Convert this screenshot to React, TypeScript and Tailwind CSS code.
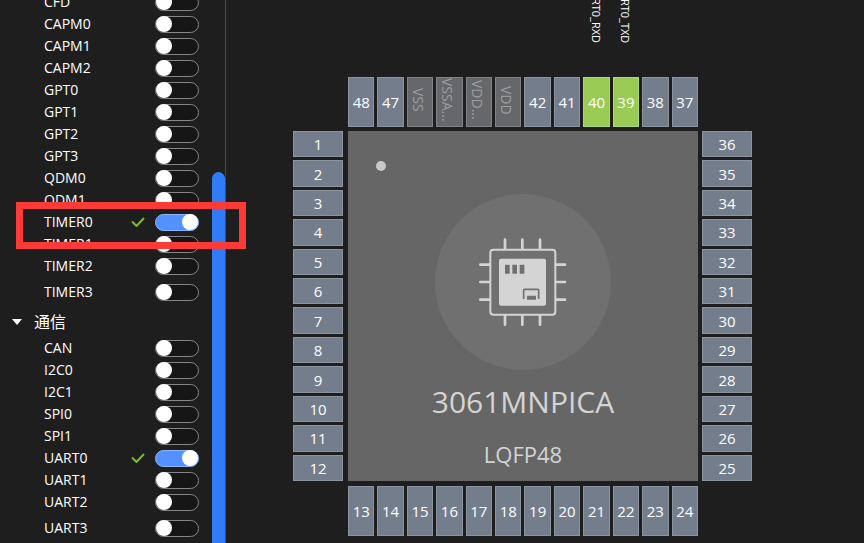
type Peripheral = { name: string; on?: boolean };
type Pin = { label: string; kind?: "power" | "active"; signal?: string };

const TIMERS: Peripheral[] = [
  { name: "CFD" },
  { name: "CAPM0" },
  { name: "CAPM1" },
  { name: "CAPM2" },
  { name: "GPT0" },
  { name: "GPT1" },
  { name: "GPT2" },
  { name: "GPT3" },
  { name: "QDM0" },
  { name: "QDM1" },
  { name: "TIMER0", on: true },
  { name: "TIMER1" },
  { name: "TIMER2" },
  { name: "TIMER3" },
];

const COMMS: Peripheral[] = [
  { name: "CAN" },
  { name: "I2C0" },
  { name: "I2C1" },
  { name: "SPI0" },
  { name: "SPI1" },
  { name: "UART0", on: true },
  { name: "UART1" },
  { name: "UART2" },
  { name: "UART3" },
];

const TOP: Pin[] = [
  { label: "48" },
  { label: "47" },
  { label: "VSS", kind: "power" },
  { label: "VSSA...", kind: "power" },
  { label: "VDD...", kind: "power" },
  { label: "VDD", kind: "power" },
  { label: "42" },
  { label: "41" },
  { label: "40", kind: "active", signal: "UART0_RXD" },
  { label: "39", kind: "active", signal: "UART0_TXD" },
  { label: "38" },
  { label: "37" },
];

const count = (from: number, step: number): Pin[] =>
  Array.from({ length: 12 }, (_, i) => ({ label: String(from + i * step) }));

const PIN_STYLE = {
  normal: "bg-[#737d8c] border-[#8b949f] text-white text-[15px]",
  active: "bg-[#9acb54] border-[#aed872] text-white text-[15px]",
  power: "bg-[#66676a] border-[#808285] text-[#9c9ea0] text-sm pr-1 pb-1 [writing-mode:vertical-rl]",
};

function PinButton({ pin }: { pin: Pin }) {
  return (
    <button
      type="button"
      className={`flex min-h-0 min-w-0 items-center justify-center border leading-5 whitespace-nowrap ${PIN_STYLE[pin.kind ?? "normal"]}`}
    >
      {pin.label}
    </button>
  );
}

function PeripheralList({ items }: { items: Peripheral[] }) {
  return (
    <ul>
      {items.map((p) => (
        <li key={p.name} className="last:pt-1">
          <label className="flex h-[22px] items-center pr-[13px] pl-11 text-sm leading-5 text-white">
            <span className="flex-1">{p.name}</span>
            {p.on && (
              <svg viewBox="0 0 14 10" className="mr-[10px] h-[10px] w-[14px]" fill="none" stroke="#7fb93a" strokeWidth="2">
                <path d="M1 4.5 5.5 9 13 1" />
              </svg>
            )}
            <input
              type="checkbox"
              defaultChecked={p.on}
              className="flex h-[17px] w-11 appearance-none items-center rounded-full border border-[#868686] bg-[#161616] before:size-4 before:shrink-0 before:rounded-full before:bg-white checked:justify-end checked:border-[#8db6ff] checked:bg-[#5291ff]"
            />
          </label>
        </li>
      ))}
    </ul>
  );
}

function ChipIcon() {
  return (
    <svg viewBox="147 142 264 264" className="size-[88px]" fill="none" stroke="#d4d4d4" strokeLinecap="round">
      <rect x="181" y="177" width="195" height="195" rx="9" strokeWidth="6" />
      <path
        strokeWidth="8"
        d="M225 147v27M277 147v27M330 147v27M225 375v27M277 375v27M330 375v27M151 222h27M151 274h27M151 327h27M378 222h27M378 274h27M378 327h27"
      />
      <rect x="207" y="204" width="141" height="141" rx="6" fill="#d4d4d4" stroke="none" />
      <path fill="#707070" stroke="none" d="M225 222h14v27h-14zM247 222h14v27h-14zM269 222h14v27h-14zM291 315h27v12h-27z" />
      <path stroke="#707070" strokeWidth="5" strokeLinecap="butt" d="M281 325v-26q0-3 3-3h39q3 0 3 3v26" />
    </svg>
  );
}

export default function App() {
  return (
    <div className="relative flex h-screen overflow-hidden bg-[#1e1e1e] font-['Open_Sans','Noto_Sans_CJK_SC',sans-serif]">
      <aside className="flex w-[226px] shrink-0 border-r border-[#4c4c4c]">
        <div className="-mt-[9px] flex-1">
          <PeripheralList items={TIMERS} />
          <button type="button" className="flex h-[34px] w-full items-center gap-3 pt-1 pl-3 text-base leading-6 text-white">
            <svg viewBox="0 0 10 6" className="h-[6px] w-[10px]" fill="#fff">
              <path d="M0 0h10L5 6z" />
            </svg>
            通信
          </button>
          <PeripheralList items={COMMS} />
        </div>
        <div className="w-[13px] pt-[172px]">
          <div className="h-full rounded-t-full bg-[#2f7bf8]" />
        </div>
      </aside>

      <main className="min-w-0 flex-1 overflow-hidden pl-[67px]">
        <div className="grid grid-cols-[51px_350px_50px] grid-rows-[73px_50px_350px_51px] gap-1">
          <div className="col-start-2 grid grid-cols-12 gap-[3px] pb-[30px]">
            {TOP.map((pin) => (
              <div key={pin.label} className="flex min-h-0 min-w-0 items-center justify-end pr-0.5 text-[11px] leading-4 text-white [writing-mode:vertical-rl]">
                <span className="whitespace-nowrap">{pin.signal}</span>
              </div>
            ))}
          </div>

          <div className="col-start-2 row-start-2 grid grid-cols-12 gap-[3px]">
            {TOP.map((pin) => (
              <PinButton key={pin.label} pin={pin} />
            ))}
          </div>

          <div className="col-start-1 row-start-3 grid w-[50px] grid-rows-12 gap-[3px]">
            {count(1, 1).map((pin) => (
              <PinButton key={pin.label} pin={pin} />
            ))}
          </div>

          <section className="relative col-start-2 row-start-3 flex flex-col items-center bg-[#666666] pt-[63px] text-[#d4d4d4]">
            <span className="absolute top-[30px] left-7 size-[10px] rounded-full bg-[#c8c8c8]" />
            <div className="flex size-44 shrink-0 items-center justify-center rounded-full bg-[#707070]">
              <ChipIcon />
            </div>
            <h1 className="mt-3 text-[30px] leading-10">3061MNPICA</h1>
            <p className="mt-4 text-[22px] leading-8">LQFP48</p>
          </section>

          <div className="col-start-3 row-start-3 grid grid-rows-12 gap-[3px]">
            {count(36, -1).map((pin) => (
              <PinButton key={pin.label} pin={pin} />
            ))}
          </div>

          <div className="col-start-2 row-start-4 grid grid-cols-12 gap-[3px] pt-px">
            {count(13, 1).map((pin) => (
              <PinButton key={pin.label} pin={pin} />
            ))}
          </div>
        </div>
      </main>

      <div className="pointer-events-none absolute top-[202px] left-4 h-[47px] w-[230px] border-7 border-[#fc3a37]" />
    </div>
  );
}
